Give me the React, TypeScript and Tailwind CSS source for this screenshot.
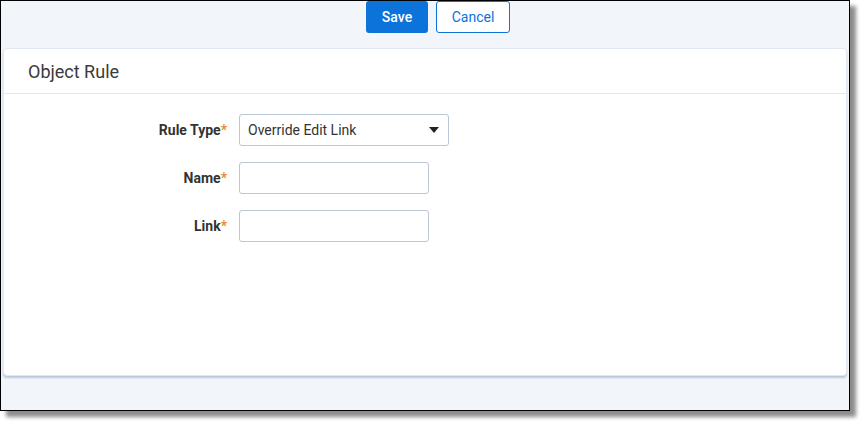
const fields = [
  { label: 'Rule Type', kind: 'select' as const, value: 'Override Edit Link' },
  { label: 'Name', kind: 'input' as const },
  { label: 'Link', kind: 'input' as const },
]

export default function App() {
  return (
    <div className="w-[864px] h-[424px] bg-white font-['Roboto',sans-serif]">
      <div className="w-[850px] h-[411px] border border-black bg-[#f2f6fa] shadow-[6px_6px_4px_rgba(0,0,0,0.45)] flex flex-col">
        <div className="flex justify-center gap-2 pl-[26px]">
          <button className="w-[62px] h-[32px] rounded-[3px] bg-[#0b73da] text-white text-[14px] font-medium">
            Save
          </button>
          <button className="w-[74px] h-[32px] rounded-[3px] bg-white border border-[#0b73da] text-[#0b73da] text-[14px]">
            Cancel
          </button>
        </div>

        <div className="mx-[2px] mt-[15px] h-[328px] bg-white rounded-[4px] border border-[#e2e8ef] shadow-[0_2px_2px_rgba(150,170,195,0.6)]">
          <div className="h-[45px] px-6 flex items-center border-b border-[#e2e8ef] text-[18px] text-[#3a3a3a]">
            Object Rule
          </div>
          <div className="pt-[20px] flex flex-col gap-[16px]">
            {fields.map((f) => (
              <div key={f.label} className="flex items-center">
                <label className="w-[223px] text-right text-[14px] font-bold text-[#333]">
                  {f.label}
                  <span className="text-[#f08a24]">*</span>
                </label>
                <div className="ml-[12px]">
                  {f.kind === 'select' ? (
                    <div className="w-[210px] h-[32px] border border-[#b9c7d6] rounded-[3px] flex items-center justify-between pl-2 pr-[9px] text-[14px] text-[#333]">
                      <span>{f.value}</span>
                      <svg width="10" height="6" viewBox="0 0 10 6">
                        <path d="M0 0h10L5 6z" fill="#222" />
                      </svg>
                    </div>
                  ) : (
                    <input className="w-[190px] h-[32px] border border-[#b9c7d6] rounded-[3px] outline-none px-2 text-[14px]" />
                  )}
                </div>
              </div>
            ))}
          </div>
        </div>
      </div>
    </div>
  )
}
